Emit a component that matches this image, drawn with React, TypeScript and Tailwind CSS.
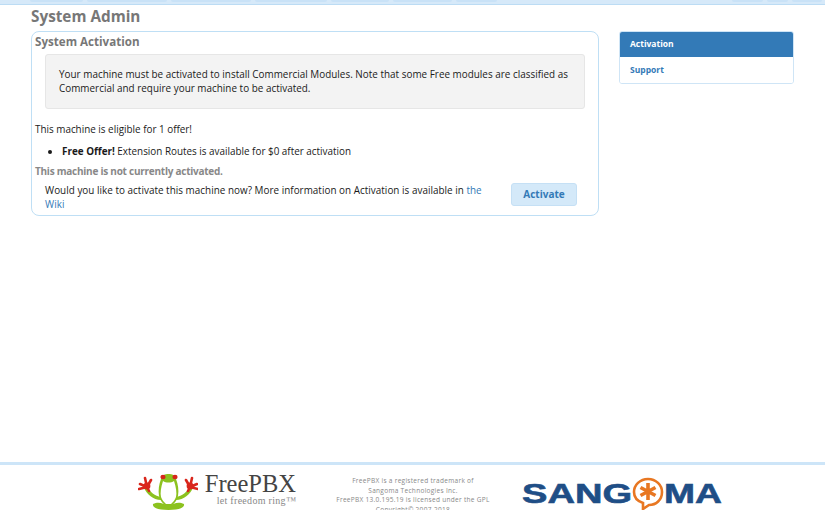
const font = "font-['Open_Sans','Noto_Sans',sans-serif]"

const leftTabs = ['w-[53px]', 'w-[80px]', 'w-[80px]', 'w-[72px]', 'w-[58px]', 'w-[59px]', 'w-[41px]']
const rightTabs = ['w-[31px]', 'w-[21px]', 'w-[30px]']

function FrogLogo() {
  return (
    <svg width="60" height="38" viewBox="0 0 60 38" className="shrink-0">
      {/* arms */}
      <path d="M8 14 C12 20 17 24 23 25 L23 28 C15 28 9 22 6 16 Z" fill="#8cc21f" />
      <path d="M53 14 C49 20 44 24 38 25 L38 28 C46 28 52 22 55 16 Z" fill="#8cc21f" />
      {/* body and head */}
      <path d="M23 7 C24 3 27 2 30.5 2 C34 2 37 3 38 7 C40 12 41 18 40 24 C39 28 37 31 34 33 L27 33 C24 31 22 28 21 24 C20 18 21 12 23 7 Z" fill="#8cc21f" />
      <path d="M25 9 C28 11 33 11 36 9 C38 15 39 21 38 25 C37 28 35 30 33 32 L28 32 C26 30 24 28 23 25 C22 21 23 15 25 9 Z" fill="#fff" />
      <ellipse cx="25" cy="5" rx="2.6" ry="2.2" fill="#d6251b" />
      <ellipse cx="37" cy="5" rx="2.6" ry="2.2" fill="#d6251b" />
      {/* hands */}
      <path d="M9 15 L2 12 M9 15 L1 17 M9 15 L7 6 M9 15 L13 8 M9 15 L11 19" stroke="#d9261c" strokeWidth="2.6" strokeLinecap="round" />
      <path d="M52 15 L59 12 M52 15 L60 17 M52 15 L54 6 M52 15 L48 8 M52 15 L50 19" stroke="#d9261c" strokeWidth="2.6" strokeLinecap="round" />
      <circle cx="9" cy="14" r="3.4" fill="#d9261c" />
      <circle cx="52" cy="14" r="3.4" fill="#d9261c" />
      {/* feet */}
      <path d="M15 32 C21 29 25 32 30.5 33 C36 32 40 29 46 32 C47 35 42 38 30.5 38 C19 38 14 35 15 32 Z" fill="#8cc21f" />
    </svg>
  )
}

function SangomaBubble() {
  return (
    <svg width="32" height="34" viewBox="0 0 32 34" className="shrink-0">
      <path d="M16 2 C24 2 30 8 30 15 C30 23 24 28 17 28 L11 32 L11 26 C5 24 2 20 2 15 C2 8 8 2 16 2 Z" fill="#fff" stroke="#e87722" strokeWidth="2.6" />
      <path d="M16 6 L16 23 M8.5 10.5 L23.5 18.5 M23.5 10.5 L8.5 18.5" stroke="#e87722" strokeWidth="3.6" />
    </svg>
  )
}

export default function App() {
  return (
    <div className={`h-[510px] w-[825px] overflow-hidden bg-white flex flex-col ${font}`}>
      <div className="h-[5px] shrink-0 flex justify-between bg-[#d6e9f9] border-b border-[#bcdcf4]">
        <div className="flex gap-[4px] ml-[30px]">
          {leftTabs.map((w, i) => (
            <div key={i} className={`${w} h-[2px] bg-[#c9e2f7] rounded-b-sm`} />
          ))}
        </div>
        <div className="flex gap-[4px] mr-[3px]">
          {rightTabs.map((w, i) => (
            <div key={i} className={`${w} h-[2px] bg-[#c9e2f7] rounded-b-sm`} />
          ))}
        </div>
      </div>

      <div className="flex-1 min-h-0 pl-[31px] pt-[1px]">
        <h1 className="text-[15.3px] leading-[21px] font-bold text-[#777777]">System Admin</h1>

        <div className="flex items-start mt-[4px]">
          <div className="w-[568px] h-[185px] border border-[#bfdff5] rounded-[8px] pl-[3px] pr-[13px]">
            <h2 className="pt-[1px] text-[11.6px] leading-[18px] font-bold text-[#777777]">System Activation</h2>
            <div className="mt-[3px] ml-[10px] h-[55px] border border-[#e6e6e6] rounded-[3px] bg-[#f3f3f3] pl-[13px] pr-[10px] pt-[12px] text-[9.9px] tracking-[0.02px] leading-[14px] text-[#1a1a1a]">
              Your machine must be activated to install Commercial Modules. Note that some Free modules are classified as Commercial and require your machine to be activated.
            </div>
            <p className="mt-[13px] text-[9.9px] leading-[14px] text-[#1a1a1a]">This machine is eligible for 1 offer!</p>
            <ul className="mt-[8px] pl-[27px] list-disc text-[9.9px] leading-[14px] text-[#1a1a1a]">
              <li><b>Free Offer!</b> Extension Routes is available for $0 after activation</li>
            </ul>
            <p className="mt-[6px] text-[10px] tracking-[-0.25px] leading-[14px] font-bold text-[#888888]">This machine is not currently activated.</p>
            <div className="flex items-start justify-between ml-[10px] mt-[5px]">
              <p className="w-[445px] pt-[1px] text-[9.9px] tracking-[0.03px] leading-[13.5px] text-[#1a1a1a]">
                Would you like to activate this machine now? More information on Activation is available in <span className="text-[#337ab7]">the Wiki</span>
              </p>
              <button className="mr-[8px] w-[66px] h-[23px] rounded-[3px] border border-[#c5e0f5] bg-[#d4e9f9] text-[10px] font-bold text-[#337ab7]">Activate</button>
            </div>
          </div>

          <div className="ml-[20px] w-[175px] h-[53px] border border-[#cfe5f6] rounded-[3px] overflow-hidden text-[8.5px] font-bold">
            <div className="h-[25px] bg-[#337ab7] text-white pl-[10px] flex items-center">Activation</div>
            <div className="h-[26px] bg-white text-[#337ab7] pl-[10px] flex items-center">Support</div>
          </div>
        </div>
      </div>

      <div className="h-[48px] shrink-0 border-t-[3px] border-[#cde5f8] flex overflow-hidden">
        <div className="ml-[138px] mt-[7px] flex items-start">
          <FrogLogo />
          <div className="flex flex-col items-end ml-[9px] w-[89px] mr-[1px]">
            <span className="font-['Liberation_Serif',serif] text-[24.5px] leading-[23px] text-[#444444] whitespace-nowrap">FreePBX</span>
            <span className="font-['Liberation_Serif',serif] text-[10px] leading-[12px] tracking-[0.3px] text-[#888888] whitespace-nowrap">let freedom ring™</span>
          </div>
        </div>
        <div className="ml-[36px] w-[160px] mt-[11px] text-center text-[6.5px] leading-[9.5px] tracking-[0.3px] text-[#888888] shrink-0">
          <div>FreePBX is a registered trademark of</div>
          <div>Sangoma Technologies Inc.</div>
          <div className="whitespace-nowrap">FreePBX 13.0.195.19 is licensed under the GPL</div>
          <div>Copyright© 2007-2018</div>
        </div>
        <div className="ml-[29px] mt-[12px] flex items-center h-[34px] font-['Liberation_Sans',sans-serif] text-[28px] leading-[28px] font-bold text-[#1f4e86] [-webkit-text-stroke:0.6px_#1f4e86] shrink-0">
          <div className="w-[110px]"><span className="inline-block origin-left scale-x-[1.36]">SANG</span></div>
          <SangomaBubble />
          <div className="w-[58px]"><span className="inline-block origin-left scale-x-[1.33]">MA</span></div>
        </div>
      </div>
    </div>
  )
}
